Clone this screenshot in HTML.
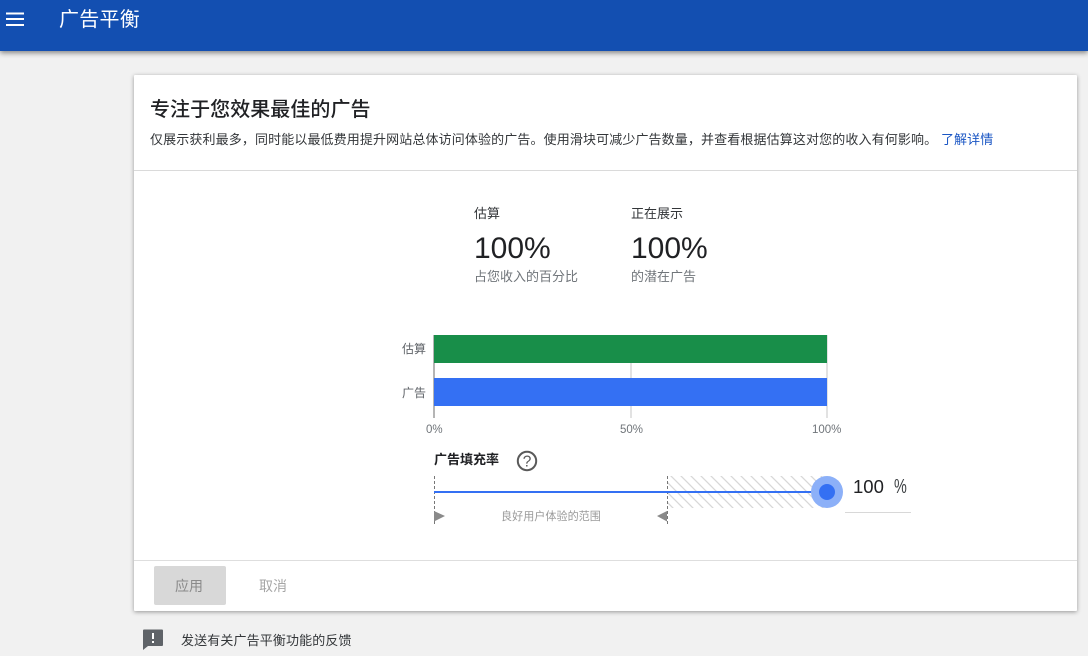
<!DOCTYPE html>
<html lang="zh-CN">
<head>
<meta charset="utf-8">
<style>
html,body{margin:0;padding:0;width:1088px;height:656px;overflow:hidden;background:#f1f1f1;font-family:"Liberation Sans","Noto Sans CJK SC",sans-serif;}
.t{position:absolute;white-space:nowrap;line-height:20px;}
.b{position:absolute;}
</style>
</head>
<body>
<div class="b" style="left:0;top:0;width:1088px;height:51px;background:#134fb1;box-shadow:0 2px 5px rgba(0,0,0,.45);"></div>
<svg class="b" style="left:0;top:0" width="40" height="40"><path d="M6 13.5H24M6 19H24M6 25H24" stroke="#fff" stroke-width="2" fill="none"/></svg>
<div class="t" style="left:59px;top:10px;font-size:20px;color:#fff;letter-spacing:.25px">广告平衡</div>

<div class="b" style="left:134px;top:75px;width:943px;height:536px;background:#fff;box-shadow:0 1px 4px rgba(0,0,0,.38);border-radius:1px;"></div>
<div class="t" style="left:150px;top:100px;font-size:20px;font-weight:500;color:#202124;letter-spacing:.05px">专注于您效果最佳的广告</div>
<div class="t" style="left:150px;top:130px;font-size:13px;letter-spacing:.12px;color:#333639;">仅展示获利最多，同时能以最低费用提升网站总体访问体验的广告。使用滑块可减少广告数量，并查看根据估算这对您的收入有何影响。 <span style="color:#1a56c4;">了解详情</span></div>
<div class="b" style="left:134px;top:170px;width:943px;height:1px;background:#dadada;"></div>

<div class="t" style="left:474px;top:204px;font-size:13px;color:#333639;">估算</div>
<div class="t" style="left:631px;top:204px;font-size:13px;color:#333639;">正在展示</div>
<div class="t" style="left:474px;top:232px;font-size:30px;line-height:34px;color:#202124;">100%</div>
<div class="t" style="left:631px;top:232px;font-size:30px;line-height:34px;color:#202124;">100%</div>
<div class="t" style="left:474px;top:267px;font-size:13px;color:#70757a;">占您收入的百分比</div>
<div class="t" style="left:631px;top:267px;font-size:13px;color:#70757a;">的潜在广告</div>

<div class="b" style="left:433px;top:335px;width:1.5px;height:83px;background:#b5b5b5;"></div>
<div class="b" style="left:630px;top:335px;width:1.5px;height:83px;background:#e2e2e2;"></div>
<div class="b" style="left:826px;top:335px;width:1.5px;height:83px;background:#e2e2e2;"></div>
<div class="b" style="left:434px;top:335px;width:393px;height:28px;background:#188e49;"></div>
<div class="b" style="left:434px;top:378px;width:393px;height:28px;background:#3470f3;"></div>
<div class="t" style="left:402px;top:339px;font-size:12px;color:#5f6368;">估算</div>
<div class="t" style="left:402px;top:383px;font-size:12px;color:#5f6368;">广告</div>
<div class="t" style="left:426px;top:420px;font-size:11.5px;color:#70757a;">0%</div>
<div class="t" style="left:620px;top:420px;font-size:11.5px;color:#70757a;">50%</div>
<div class="t" style="left:812px;top:420px;font-size:11.5px;color:#70757a;">100%</div>

<div class="t" style="left:434px;top:450px;font-size:13px;font-weight:bold;color:#202124;">广告填充率</div>
<svg class="b" style="left:515px;top:449px" width="24" height="24"><circle cx="12" cy="12" r="9.2" fill="none" stroke="#5a5a5a" stroke-width="2"/><text x="12" y="17.5" font-size="15.5" text-anchor="middle" fill="#5a5a5a" font-family="Liberation Sans">?</text></svg>

<svg class="b" style="left:425px;top:470px" width="430" height="60">
<defs><pattern id="h" width="10" height="10" patternUnits="userSpaceOnUse"><path d="M-1 -1L11 11M-11 -1L1 11M9 -1L21 11" stroke="#d8d8d8" stroke-width="1.3"/></pattern></defs>
<rect x="242" y="6" width="160" height="32" fill="url(#h)"/>
<path d="M9.5 6V54M242.5 6V54" stroke="#777" stroke-width="1" stroke-dasharray="3 2" fill="none"/>
<rect x="9" y="21" width="393" height="2" fill="#3470f3"/>
<path d="M9 41L20 46L9 51.5Z" fill="#8a8a8a"/>
<path d="M242 41L232 46L242 51.5Z" fill="#8a8a8a"/>
<circle cx="402" cy="22" r="16" fill="#8cb0f8"/>
<circle cx="402" cy="22" r="8" fill="#3470f3"/>
</svg>
<div class="t" style="left:501px;top:507px;font-size:11.1px;color:#9a9a9a;">良好用户体验的范围</div>
<div class="t" style="left:853px;top:477px;font-size:18.5px;color:#202124;">100</div>
<div class="t" style="left:894px;top:477px;font-size:20px;color:#3c4043;transform:scaleX(.72);transform-origin:left center;">%</div>
<div class="b" style="left:845px;top:512px;width:66px;height:1px;background:#d8d8d8;"></div>

<div class="b" style="left:134px;top:560px;width:943px;height:1px;background:#dedede;"></div>
<div class="b" style="left:154px;top:566px;width:72px;height:39px;background:#d8d8d8;border-radius:2px;"></div>
<div class="t" style="left:175px;top:576px;font-size:14px;color:#8a8a8a;">应用</div>
<div class="t" style="left:259px;top:576px;font-size:14px;color:#a6a6a6;">取消</div>

<svg class="b" style="left:142px;top:628px" width="22" height="24"><path d="M2 1.5H20Q21 1.5 21 2.5V17Q21 18 20 18H6L1 22V2.5Q1 1.5 2 1.5Z" fill="#5f6368"/><rect x="10" y="5" width="2" height="6" fill="#fff"/><rect x="10" y="13" width="2" height="2" fill="#fff"/></svg>
<div class="t" style="left:181px;top:631px;font-size:13px;letter-spacing:.13px;color:#333639;">发送有关广告平衡功能的反馈</div>
</body>
</html>
